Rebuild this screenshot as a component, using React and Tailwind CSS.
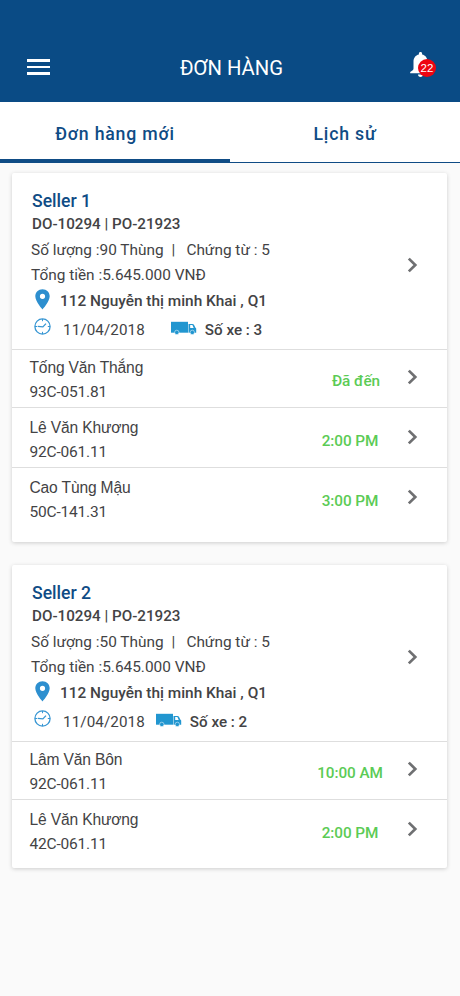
import React, { useState } from 'react';

const orders = [
  {
    id: 1,
    seller: 'Seller 1',
    code: 'DO-10294 | PO-21923',
    quantity: 90,
    documents: 5,
    total: '5.645.000',
    address: '112 Nguyễn thị minh Khai , Q1',
    date: '11/04/2018',
    trucks: 3,
    truckGap: 'ml-[26px]',
    drivers: [
      { name: 'Tống Văn Thắng', plate: '93C-051.81', status: 'Đã đến', arrived: true, row: 'h-[58px]' },
      { name: 'Lê Văn Khương', plate: '92C-061.11', status: '2:00 PM', row: 'h-[60px] pt-[2px]' },
      { name: 'Cao Tùng Mậu', plate: '50C-141.31', status: '3:00 PM', row: 'h-[75px] pt-[2px]' },
    ],
  },
  {
    id: 2,
    seller: 'Seller 2',
    code: 'DO-10294 | PO-21923',
    quantity: 50,
    documents: 5,
    total: '5.645.000',
    address: '112 Nguyễn thị minh Khai , Q1',
    date: '11/04/2018',
    trucks: 2,
    truckGap: 'ml-[11px]',
    drivers: [
      { name: 'Lâm Văn Bôn', plate: '92C-061.11', status: '10:00 AM', row: 'h-[58px]' },
      { name: 'Lê Văn Khương', plate: '42C-061.11', status: '2:00 PM', row: 'h-[69px] pt-[2px]' },
    ],
  },
];

const Chevron = () => (
  <svg className="block h-[16px] w-[11px] shrink-0" viewBox="0 0 11 16" fill="none">
    <path d="M1.8 1.6 8.3 8 1.8 14.4" stroke="#6f7072" strokeWidth="2.7" />
  </svg>
);

const PinIcon = () => (
  <svg className="block h-[21px] w-[15px] shrink-0" viewBox="0 0 15 21">
    <path
      d="M7.5.2C3.4.2.3 3.3.3 7.3c0 5.2 7.2 13.2 7.2 13.2s7.2-8 7.2-13.2C14.7 3.3 11.6.2 7.5.2Zm0 9.7a2.6 2.6 0 1 1 0-5.2 2.6 2.6 0 0 1 0 5.2Z"
      fill="#2d8fcf"
    />
  </svg>
);

const ClockIcon = () => (
  <svg className="block h-[17px] w-[17px] shrink-0" viewBox="0 0 17 17" fill="none" stroke="#3796d3">
    <circle cx="8.5" cy="8.5" r="7.6" strokeWidth="1.3" />
    <path d="M8.5 1v2.2M8.5 13.8V16M1 8.5h2.2M13.8 8.5H16" strokeWidth="1" />
    <path d="M12 5.6 8.9 8.9 3.8 8.3" strokeWidth="1.3" />
  </svg>
);

const TruckIcon = () => (
  <svg className="block h-[14px] w-[26px] shrink-0" viewBox="0 0 26 14">
    <path d="M0 .8h17v10.9H0Z" fill="#2196d0" />
    <path d="M17.5 3h3.9c.8 0 1.3.3 1.7 1l1.2 2.6.9.9v4.2h-7.7Z" fill="#2196d0" />
    <path d="M19.2 4.1h2.2l1.3 2.8h-3.5Z" fill="#fff" />
    <circle cx="5.8" cy="11.4" r="2.2" fill="#2196d0" stroke="#fff" strokeWidth=".5" />
    <circle cx="21.3" cy="11.4" r="2.2" fill="#2196d0" stroke="#fff" strokeWidth=".5" />
  </svg>
);

const Header = () => (
  <header className="flex h-[102px] items-end bg-[#0a4b85] text-white">
    <div className="flex h-[70px] w-full items-center justify-between pr-[24px] pl-[27px]">
      <button className="flex w-[55px] flex-col gap-[4px]">
        <span className="h-[2.5px] w-[23px] bg-white" />
        <span className="h-[2.5px] w-[23px] bg-white" />
        <span className="h-[2.5px] w-[23px] bg-white" />
      </button>
      <h1 className="pt-[2px] text-[20.3px] leading-[24px]">ĐƠN HÀNG</h1>
      <button className="relative flex w-[55px] justify-end pb-[4px]">
        <svg className="mr-[5px] block h-[26px] w-[21px]" viewBox="0 0 21 26" fill="#fff">
          <path d="M10.5 0c1 0 1.6.7 1.6 1.6v.8c3.3.7 5.4 3.5 5.4 7v7.2c0 1.4 1 2.3 3.3 3.3v1.3H.2v-1.3c2.3-1 3.3-1.9 3.3-3.3V9.4c0-3.5 2.1-6.3 5.4-7v-.8C8.9.7 9.5 0 10.5 0ZM8 22.5h5c0 1.4-1 2.5-2.5 2.5S8 23.9 8 22.5Z" />
        </svg>
        <span className="absolute top-[7px] right-0 flex h-[18px] w-[18px] items-center justify-center rounded-full bg-[#ee0410] pt-[2px] font-['Liberation_Sans',sans-serif] text-[11.5px] leading-none">
          22
        </span>
      </button>
    </div>
  </header>
);

const Tabs = ({ tab, setTab }) => (
  <nav className="grid h-[61px] grid-cols-2 bg-white text-[17.7px] font-medium tracking-[0.8px] text-[#0f4c85]">
    {['Đơn hàng mới', 'Lịch sử'].map((label, i) => (
      <button
        key={label}
        onClick={() => setTab(i)}
        className={`flex items-center justify-center border-[#0f4c85] pt-[8px] ${
          tab === i ? 'border-b-4' : 'border-b pb-[3px]'
        }`}
      >
        {label}
      </button>
    ))}
  </nav>
);

const DriverRow = ({ driver }) => (
  <li className={`flex items-start border-t border-[#dedede] pr-[29px] pl-[17.5px] ${driver.row}`}>
    <div className="flex-1 pt-[6px]">
      <div className="font-['Liberation_Sans',sans-serif] text-[15.6px] leading-[24px] tracking-[-0.16px]">
        {driver.name}
      </div>
      <div className="text-[15.5px] leading-[24px] tracking-[-0.2px]">{driver.plate}</div>
    </div>
    <div
      className={`w-[100px] pt-[19px] text-center text-[15.3px] leading-[24px] font-medium tracking-[-0.05px] text-[#5bcb55] ${
        driver.arrived ? '' : 'mr-[6px]'
      }`}
    >
      {driver.status}
    </div>
    <div className="ml-[1px] pt-[19px]">
      <Chevron />
    </div>
  </li>
);

const OrderCard = ({ order }) => (
  <section className="rounded-[2px] bg-white text-[#434345] shadow-[0_1px_4px_rgba(0,0,0,0.18)]">
    <div className="flex h-[176px] items-center pr-[29px]">
      <div className="h-full flex-1 pt-[16px] pl-[19px] whitespace-nowrap">
        <h2 className="pl-[1px] text-[17.6px] leading-[24px] font-medium text-[#0f4c85]">{order.seller}</h2>
        <div className="pl-[1px] text-[15.2px] leading-[23px] font-medium">{order.code}</div>
        <div className="flex pt-[2px] text-[15.4px] leading-[25px]">
          <span>Số lượng :{order.quantity} Thùng</span>
          <span className="ml-[8px]">|</span>
          <span className="ml-[11px]">Chứng từ : {order.documents}</span>
        </div>
        <div className="text-[15.4px] leading-[25px]">Tổng tiền :{order.total} VNĐ</div>
        <div className="flex h-[25px] items-center pl-[4px] text-[15.4px] font-medium">
          <div className="pb-[2px]">
            <PinIcon />
          </div>
          <span className="ml-[10px] pt-[2px]">{order.address}</span>
        </div>
        <div className="flex h-[30px] items-center pl-[3px] text-[15.2px]">
          <div className="pb-[4px]">
            <ClockIcon />
          </div>
          <span className="ml-[12px] pt-[5px] tracking-[0.1px]">{order.date}</span>
          <div className={order.truckGap}>
            <TruckIcon />
          </div>
          <span className="ml-[8px] pt-[4px] font-medium">Số xe : {order.trucks}</span>
        </div>
      </div>
      <div className="pt-[8px]">
        <Chevron />
      </div>
    </div>
    <ul>
      {order.drivers.map((d) => (
        <DriverRow key={d.plate} driver={d} />
      ))}
    </ul>
  </section>
);

export default function App() {
  const [tab, setTab] = useState(0);

  return (
    <div className="min-h-screen w-full bg-[#fafafa] font-[Roboto,sans-serif]">
      <Header />
      <Tabs tab={tab} setTab={setTab} />
      <main className="flex flex-col gap-[23px] pt-[10px] pr-[13px] pl-[12px]">
        {orders.map((o) => (
          <OrderCard key={o.id} order={o} />
        ))}
      </main>
    </div>
  );
}
